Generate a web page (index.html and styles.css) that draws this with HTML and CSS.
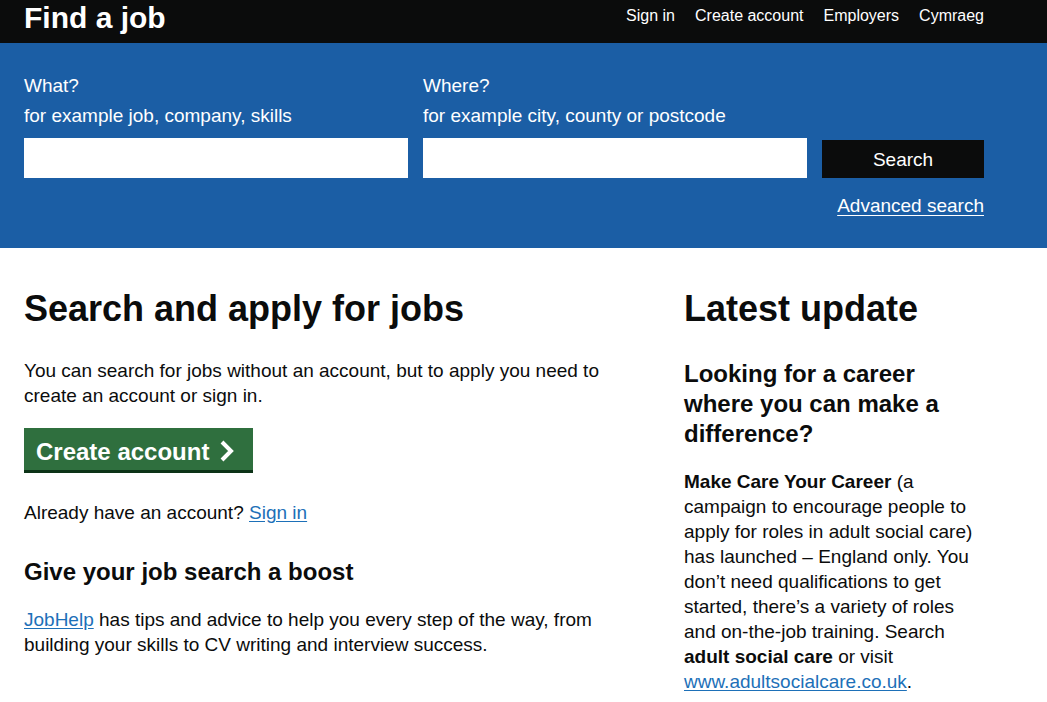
FILE: index.html
```html
<!DOCTYPE html>
<html lang="en">
<head>
<meta charset="utf-8">
<title>Find a job</title>
<link rel="stylesheet" href="styles.css">
</head>
<body>
<header class="topbar">
  <div class="wrap topbar-inner">
    <a class="brand" href="#">Find a job</a>
    <nav class="nav">
      <a href="#">Sign in</a>
      <a href="#">Create account</a>
      <a href="#">Employers</a>
      <a href="#">Cymraeg</a>
    </nav>
  </div>
</header>

<section class="search">
  <form class="wrap search-form">
    <div class="field">
      <label class="label">What?</label>
      <span class="hint">for example job, company, skills</span>
      <input class="input" type="text">
    </div>
    <div class="field">
      <label class="label">Where?</label>
      <span class="hint">for example city, county or postcode</span>
      <input class="input" type="text">
    </div>
    <div class="field field-btn">
      <button class="search-btn" type="button">Search</button>
    </div>
  </form>
  <div class="wrap adv-row">
    <a class="adv-link" href="#">Advanced search</a>
  </div>
</section>

<main class="wrap main">
  <div class="col-main">
    <h1 class="h-xl">Search and apply for jobs</h1>
    <p class="body">You can search for jobs without an account, but to apply you need to create an account or sign in.</p>
    <a class="start-btn" href="#">Create account
      <svg class="chev" viewBox="0 0 14 22" width="14" height="22" aria-hidden="true"><path d="M2 2 L11 11 L2 20" fill="none" stroke="#fff" stroke-width="4" stroke-linejoin="miter"/></svg>
    </a>
    <p class="body already">Already have an account? <a class="link" href="#">Sign in</a></p>
    <h2 class="h-m">Give your job search a boost</h2>
    <p class="body"><a class="link" href="#">JobHelp</a> has tips and advice to help you every step of the way, from building your skills to CV writing and interview success.</p>
  </div>
  <aside class="col-side">
    <h2 class="h-xl">Latest update</h2>
    <h3 class="h-m side-h">Looking for a career where you can make a difference?</h3>
    <p class="body"><strong>Make Care Your Career</strong> (a campaign to encourage people to apply for roles in adult social care) has launched – England only. You don’t need qualifications to get started, there’s a variety of roles and on-the-job training. Search <strong>adult social care</strong> or visit <a class="link" href="#">www.adultsocialcare.co.uk</a>.</p>
  </aside>
</main>
</body>
</html>
```

FILE: styles.css
```css
* { box-sizing: border-box; }
html, body { margin: 0; padding: 0; }
body {
  font-family: "Liberation Sans", Arial, Helvetica, sans-serif;
  color: #0b0c0c;
  background: #fff;
}
.wrap {
  width: 960px;
  margin-left: 24px;
}

/* top bar */
.topbar {
  background: #0b0c0c;
  height: 43px;
}
.topbar-inner {
  display: flex;
  justify-content: space-between;
  align-items: flex-start;
}
.brand {
  color: #fff;
  text-decoration: none;
  font-weight: 700;
  font-size: 30px;
  line-height: 36px;
}
.nav {
  display: flex;
  gap: 20px;
  padding-top: 6px;
}
.nav a {
  color: #fff;
  text-decoration: none;
  font-size: 16px;
  line-height: 20px;
}

/* search band */
.search {
  background: #1b5ea5;
  padding: 30px 0 30px;
}
.search-form {
  display: grid;
  grid-template-columns: 384px 384px 162px;
  column-gap: 15px;
  align-items: end;
}
.field {
  display: flex;
  flex-direction: column;
}
.label, .hint {
  color: #fff;
  font-size: 19px;
  line-height: 25px;
}
.hint {
  margin-top: 5px;
  margin-bottom: 10px;
}
.input {
  height: 40px;
  border: 0;
  background: #fff;
  margin: 0;
  font-size: 19px;
  padding: 0 8px;
}
.search-btn {
  height: 38px;
  border: 0;
  background: #0b0c0c;
  color: #fff;
  font-family: inherit;
  font-size: 19px;
  line-height: 25px;
  margin: 0;
  padding: 1px 0 0;
  cursor: pointer;
}
.adv-row {
  display: flex;
  justify-content: flex-end;
  margin-top: 15px;
}
.adv-link {
  color: #fff;
  font-size: 19px;
  line-height: 25px;
  text-decoration: underline;
  text-underline-offset: 3px;
}

/* main */
.main {
  display: grid;
  grid-template-columns: 630px 300px;
  column-gap: 30px;
  padding-top: 41px;
}
.h-xl {
  font-size: 36px;
  line-height: 40px;
  font-weight: 700;
  margin: 0 0 29px;
}
.h-m {
  font-size: 24px;
  line-height: 30px;
  font-weight: 700;
  margin: 0 0 20px;
}
.side-h { margin-top: 30px; margin-bottom: 20px; }
.body {
  font-size: 19px;
  line-height: 25px;
  margin: 0 0 20px;
}
.body strong { font-weight: 700; }
.link {
  color: #1d70b8;
  text-decoration: underline;
  text-underline-offset: 2px;
}
.start-btn {
  display: inline-flex;
  align-items: center;
  gap: 11px;
  background: #2f6f3e;
  color: #fff;
  text-decoration: none;
  font-weight: 700;
  font-size: 24px;
  line-height: 28px;
  padding: 10px 19px 4px 12px;
  height: 42px;
  box-shadow: 0 3px 0 #0c3317;
  margin-bottom: 30px;
}
.chev { display: block; margin-top: -3px; }
.already { margin-bottom: 32px; }
```
